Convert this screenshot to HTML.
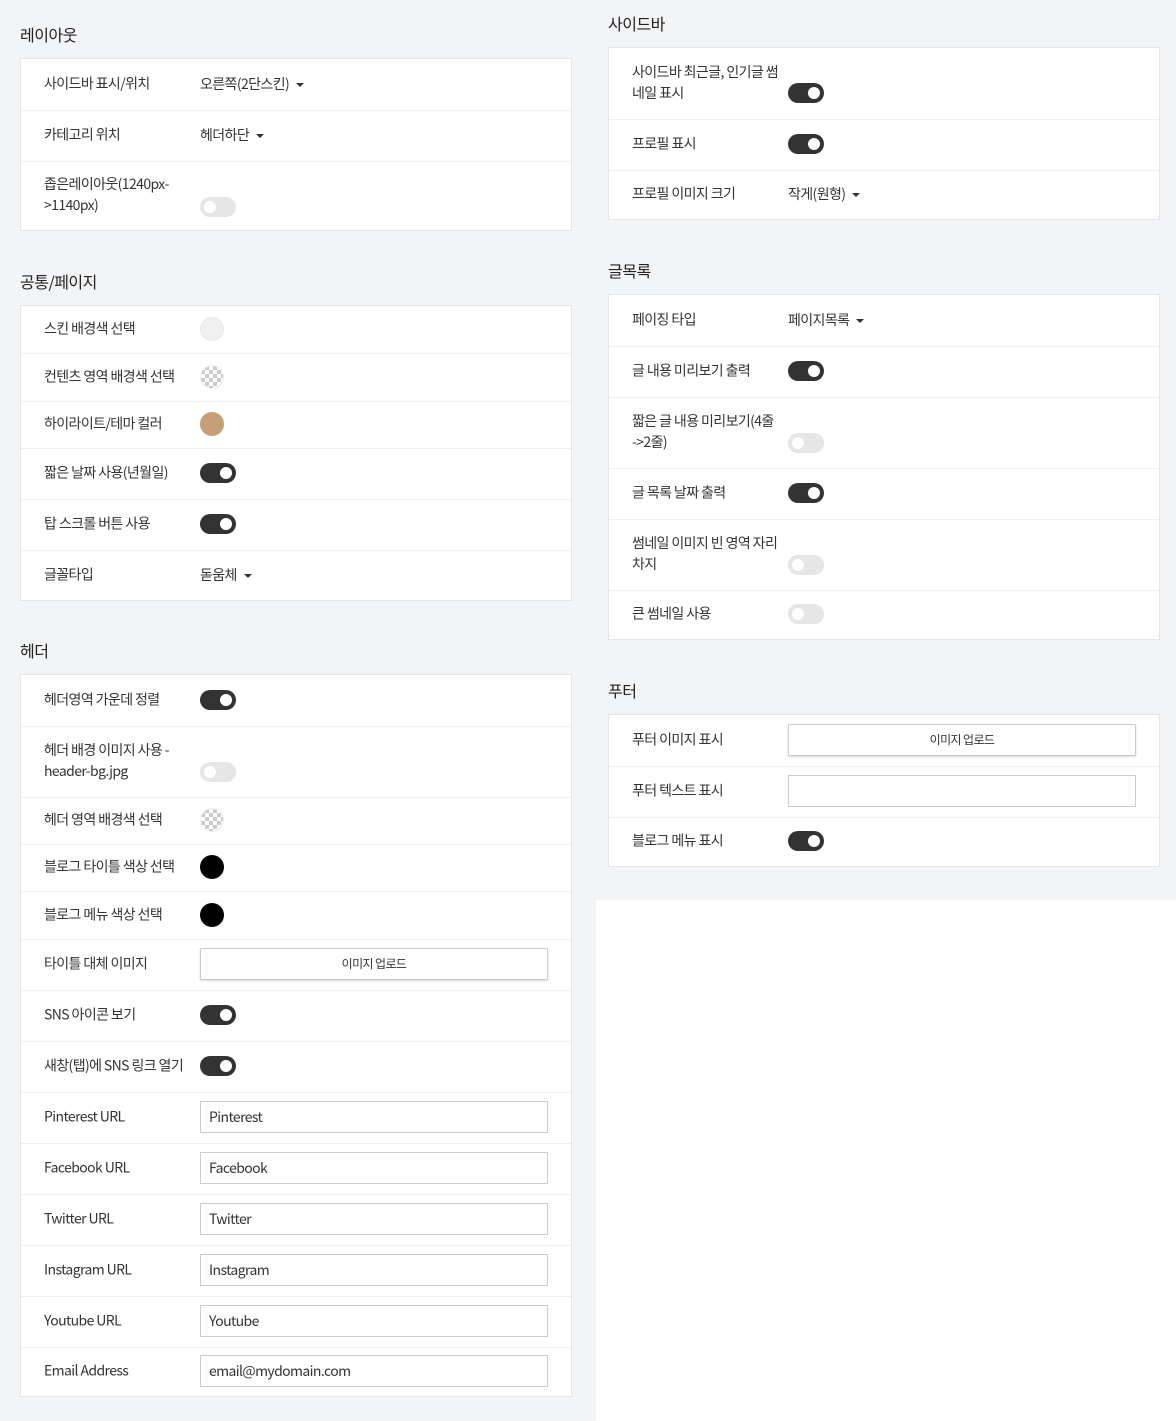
<!DOCTYPE html>
<html><head><meta charset="utf-8"><style>
*{box-sizing:border-box;margin:0;padding:0}
body{width:1176px;height:1421px;background:#f3f4f6;font-family:"Noto Sans CJK KR","Liberation Sans",sans-serif;color:#333;position:relative;overflow:hidden}
.t{position:absolute;font-size:16px;color:#222;line-height:20px;letter-spacing:-0.5px}
.p{position:absolute;width:552px;background:#fff;border:1px solid #e3e5e8}
.r{position:relative;border-top:1px solid #eef0f2}
.r:first-child{border-top:none}
.l{position:absolute;left:23px;top:calc(50% - 1px);transform:translateY(-50%);font-size:14px;line-height:21px;letter-spacing:-0.6px;white-space:nowrap}
.c{position:absolute;left:179px;top:calc(50% - 1px);transform:translateY(-50%);font-size:14px;letter-spacing:-0.6px}
.tall .c{top:35px;transform:none}
.tg{width:36px;height:20px;border-radius:10px;background:#333;position:relative}
.tg:after{content:"";position:absolute;right:4px;top:4px;width:12px;height:12px;border-radius:50%;background:#fff}
.tg.off{background:#e6e6e6}
.tg.off:after{right:auto;left:4px}
.dd:after{content:"";display:inline-block;margin-left:7px;vertical-align:middle;border-left:4px solid transparent;border-right:4px solid transparent;border-top:4px solid #333}
.cc{width:24px;height:24px;border-radius:50%}
.ck{background:conic-gradient(#ccc 25%,#fff 0 50%,#ccc 0 75%,#fff 0) 0 0/8px 8px;border:1px solid #eee}
.in{width:348px;height:32px;border:1px solid #c8ccd3;padding-left:8px;line-height:30px;font-size:14px;color:#333}
.bt{text-align:center;font-size:12px;padding:0;box-shadow:0 1px 2px rgba(0,0,0,.15)}
</style></head><body>

<div class="t" style="left:20px;top:24px">레이아웃</div>
<div class="p" style="left:20px;top:58px">
<div class="r" style="height:51px"><div class="l">사이드바 표시/위치</div><div class="c dd">오른쪽(2단스킨)</div></div>
<div class="r" style="height:51px"><div class="l">카테고리 위치</div><div class="c dd">헤더하단</div></div>
<div class="r tall" style="height:69px"><div class="l">좁은레이아웃(1240px-<br>&gt;1140px)</div><div class="c"><div class="tg off"></div></div></div>
</div>

<div class="t" style="left:20px;top:271px">공통/페이지</div>
<div class="p" style="left:20px;top:305px">
<div class="r" style="height:47px"><div class="l">스킨 배경색 선택</div><div class="c"><div class="cc" style="background:#f0f0f0;border:1px solid #e8e8e8"></div></div></div>
<div class="r" style="height:48px"><div class="l">컨텐츠 영역 배경색 선택</div><div class="c"><div class="cc ck"></div></div></div>
<div class="r" style="height:47px"><div class="l">하이라이트/테마 컬러</div><div class="c"><div class="cc" style="background:#c49f77"></div></div></div>
<div class="r" style="height:51px"><div class="l">짧은 날짜 사용(년월일)</div><div class="c"><div class="tg"></div></div></div>
<div class="r" style="height:51px"><div class="l">탑 스크롤 버튼 사용</div><div class="c"><div class="tg"></div></div></div>
<div class="r" style="height:50px"><div class="l">글꼴타입</div><div class="c dd">돋움체</div></div>
</div>

<div class="t" style="left:20px;top:640px">헤더</div>
<div class="p" style="left:20px;top:674px">
<div class="r" style="height:51px"><div class="l">헤더영역 가운데 정렬</div><div class="c"><div class="tg"></div></div></div>
<div class="r tall" style="height:71px"><div class="l">헤더 배경 이미지 사용 -<br>header-bg.jpg</div><div class="c"><div class="tg off"></div></div></div>
<div class="r" style="height:47px"><div class="l">헤더 영역 배경색 선택</div><div class="c"><div class="cc ck"></div></div></div>
<div class="r" style="height:47px"><div class="l">블로그 타이틀 색상 선택</div><div class="c"><div class="cc" style="background:#000"></div></div></div>
<div class="r" style="height:48px"><div class="l">블로그 메뉴 색상 선택</div><div class="c"><div class="cc" style="background:#000"></div></div></div>
<div class="r" style="height:51px"><div class="l">타이틀 대체 이미지</div><div class="c"><div class="in bt">이미지 업로드</div></div></div>
<div class="r" style="height:51px"><div class="l">SNS 아이콘 보기</div><div class="c"><div class="tg"></div></div></div>
<div class="r" style="height:51px"><div class="l">새창(탭)에 SNS 링크 열기</div><div class="c"><div class="tg"></div></div></div>
<div class="r" style="height:51px"><div class="l">Pinterest URL</div><div class="c"><div class="in">Pinterest</div></div></div>
<div class="r" style="height:51px"><div class="l">Facebook URL</div><div class="c"><div class="in">Facebook</div></div></div>
<div class="r" style="height:51px"><div class="l">Twitter URL</div><div class="c"><div class="in">Twitter</div></div></div>
<div class="r" style="height:51px"><div class="l">Instagram URL</div><div class="c"><div class="in">Instagram</div></div></div>
<div class="r" style="height:51px"><div class="l">Youtube URL</div><div class="c"><div class="in">Youtube</div></div></div>
<div class="r" style="height:49px"><div class="l">Email Address</div><div class="c"><div class="in">email@mydomain.com</div></div></div>
</div>

<div class="t" style="left:608px;top:13px">사이드바</div>
<div class="p" style="left:608px;top:47px">
<div class="r tall" style="height:71px"><div class="l">사이드바 최근글, 인기글 썸<br>네일 표시</div><div class="c"><div class="tg"></div></div></div>
<div class="r" style="height:51px"><div class="l">프로필 표시</div><div class="c"><div class="tg"></div></div></div>
<div class="r" style="height:49px"><div class="l">프로필 이미지 크기</div><div class="c dd">작게(원형)</div></div>
</div>

<div class="t" style="left:608px;top:260px">글목록</div>
<div class="p" style="left:608px;top:294px">
<div class="r" style="height:51px"><div class="l">페이징 타입</div><div class="c dd">페이지목록</div></div>
<div class="r" style="height:51px"><div class="l">글 내용 미리보기 출력</div><div class="c"><div class="tg"></div></div></div>
<div class="r tall" style="height:71px"><div class="l">짧은 글 내용 미리보기(4줄<br>-&gt;2줄)</div><div class="c"><div class="tg off"></div></div></div>
<div class="r" style="height:51px"><div class="l">글 목록 날짜 출력</div><div class="c"><div class="tg"></div></div></div>
<div class="r tall" style="height:71px"><div class="l">썸네일 이미지 빈 영역 자리<br>차지</div><div class="c"><div class="tg off"></div></div></div>
<div class="r" style="height:49px"><div class="l">큰 썸네일 사용</div><div class="c"><div class="tg off"></div></div></div>
</div>

<div class="t" style="left:608px;top:680px">푸터</div>
<div class="p" style="left:608px;top:714px">
<div class="r" style="height:51px"><div class="l">푸터 이미지 표시</div><div class="c"><div class="in bt">이미지 업로드</div></div></div>
<div class="r" style="height:51px"><div class="l">푸터 텍스트 표시</div><div class="c"><div class="in"></div></div></div>
<div class="r" style="height:49px"><div class="l">블로그 메뉴 표시</div><div class="c"><div class="tg"></div></div></div>
</div>

<div style="position:absolute;left:596px;top:900px;width:580px;height:521px;background:#fff"></div>
</body></html>
